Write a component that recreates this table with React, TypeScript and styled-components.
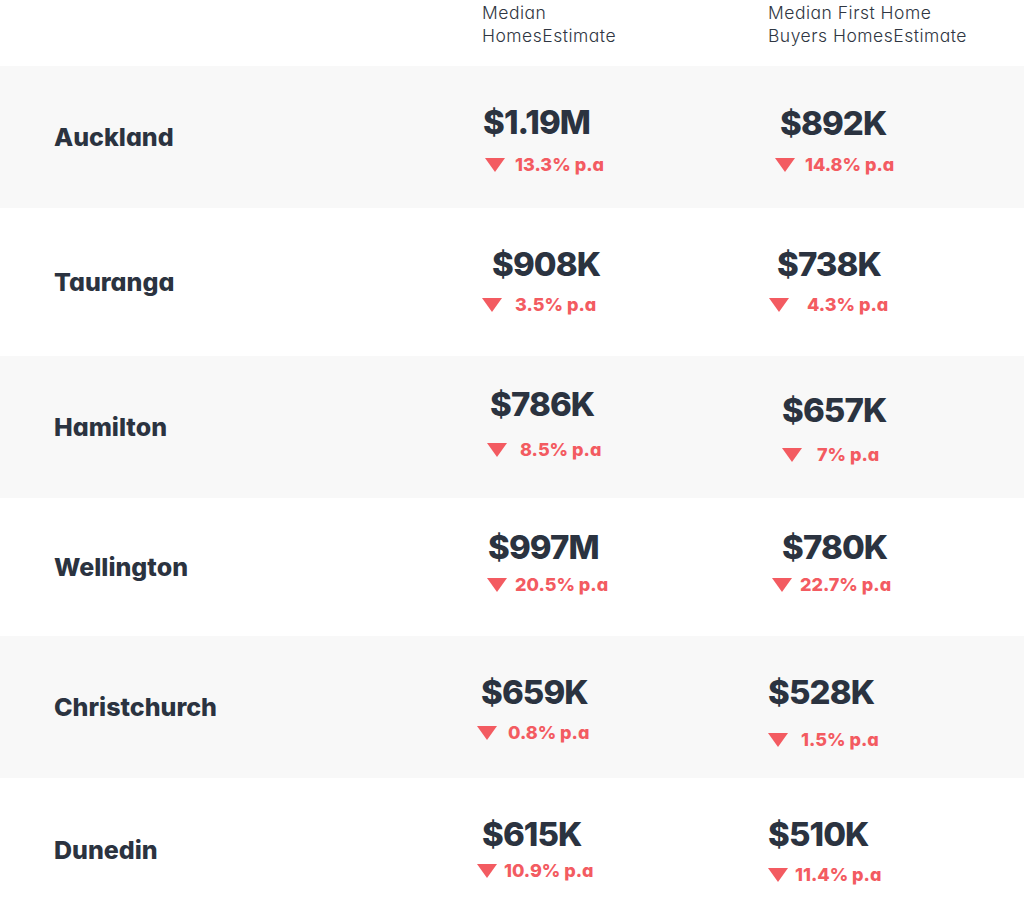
import React from "react";
import styled, { createGlobalStyle } from "styled-components";

const GlobalStyle = createGlobalStyle`
  body {
    margin: 0;
    background: #ffffff;
    font-family: Inter, "Liberation Sans", sans-serif;
    font-feature-settings: "cv11";
  }
`;

const Table = styled.div`
  width: 1024px;
`;

const HeaderRow = styled.div`
  display: grid;
  grid-template-columns: 470px 290px 1fr;
  height: 66px;
`;

const HeaderCell = styled.div<{ $indent: number }>`
  padding: 1px 0 0 ${p => p.$indent}px;
  font-size: 17.5px;
  font-weight: 300;
  line-height: 23px;
  letter-spacing: 0.5px;
  color: #2f3642;
`;

const Row = styled.div<{ $shade: boolean; $height: number }>`
  display: grid;
  grid-template-columns: 470px 290px 1fr;
  height: ${p => p.$height}px;
  background: ${p => (p.$shade ? "#f8f8f8" : "#ffffff")};
`;

const City = styled.div`
  display: flex;
  align-items: center;
  padding-left: 54px;
  font-size: 25px;
  font-weight: 850;
  color: #2b3340;
`;

const Cell = styled.div<{ $capTop: number }>`
  display: flex;
  flex-direction: column;
  align-items: flex-start;
  padding-top: ${p => p.$capTop - 5}px;
`;

const Value = styled.div<{ $shift: number }>`
  margin-left: ${p => p.$shift}px;
  font-size: 33px;
  font-weight: 800;
  line-height: 34px;
  letter-spacing: -0.9px;
  color: #2b3340;
`;

const Change = styled.div<{ $shift: number; $drop: number; $gap: number }>`
  display: flex;
  align-items: center;
  gap: ${p => p.$gap}px;
  margin-left: ${p => p.$shift}px;
  margin-top: ${p => p.$drop - 31}px;
  font-size: 18px;
  font-weight: 850;
  line-height: 18px;
  color: #f35b61;
`;

const Arrow = styled.span`
  width: 0;
  height: 0;
  border-left: 10px solid transparent;
  border-right: 10px solid transparent;
  border-top: 14px solid #f35b61;
`;

interface Estimate {
  value: string;
  change: string;
  capTop: number;
  drop: number;
  valueX: number;
  arrowX: number;
  gap: number;
}

interface City {
  name: string;
  height: number;
  median: Estimate;
  firstHome: Estimate;
}

const cities: City[] = [
  {
    name: "Auckland",
    height: 142,
    median: { value: "$1.19M", change: "13.3% p.a", capTop: 44, drop: 48, valueX: 13, arrowX: 15, gap: 10 },
    firstHome: { value: "$892K", change: "14.8% p.a", capTop: 45, drop: 47, valueX: 20, arrowX: 15, gap: 10 }
  },
  {
    name: "Tauranga",
    height: 148,
    median: { value: "$908K", change: "3.5% p.a", capTop: 44, drop: 46, valueX: 22, arrowX: 12, gap: 13 },
    firstHome: { value: "$738K", change: "4.3% p.a", capTop: 44, drop: 46, valueX: 17, arrowX: 9, gap: 18 }
  },
  {
    name: "Hamilton",
    height: 142,
    median: { value: "$786K", change: "8.5% p.a", capTop: 36, drop: 51, valueX: 20, arrowX: 17, gap: 13 },
    firstHome: { value: "$657K", change: "7% p.a", capTop: 42, drop: 50, valueX: 22, arrowX: 22, gap: 15 }
  },
  {
    name: "Wellington",
    height: 138,
    median: { value: "$997M", change: "20.5% p.a", capTop: 37, drop: 43, valueX: 18, arrowX: 17, gap: 8 },
    firstHome: { value: "$780K", change: "22.7% p.a", capTop: 37, drop: 43, valueX: 22, arrowX: 12, gap: 8 }
  },
  {
    name: "Christchurch",
    height: 142,
    median: { value: "$659K", change: "0.8% p.a", capTop: 44, drop: 46, valueX: 11, arrowX: 7, gap: 11 },
    firstHome: { value: "$528K", change: "1.5% p.a", capTop: 44, drop: 53, valueX: 8, arrowX: 8, gap: 13 }
  },
  {
    name: "Dunedin",
    height: 143,
    median: { value: "$615K", change: "10.9% p.a", capTop: 44, drop: 42, valueX: 12, arrowX: 7, gap: 7 },
    firstHome: { value: "$510K", change: "11.4% p.a", capTop: 44, drop: 46, valueX: 8, arrowX: 8, gap: 7 }
  }
];

const EstimateCell: React.FC<{ data: Estimate }> = ({ data }) => (
  <Cell $capTop={data.capTop}>
    <Value $shift={data.valueX}>{data.value}</Value>
    <Change $shift={data.arrowX} $drop={data.drop} $gap={data.gap}>
      <Arrow />
      {data.change}
    </Change>
  </Cell>
);

const App: React.FC = () => {
  return (
    <>
      <GlobalStyle />
      <Table>
        <HeaderRow>
          <div />
          <HeaderCell $indent={12}>
            Median
            <br />
            HomesEstimate
          </HeaderCell>
          <HeaderCell $indent={8}>
            Median First Home
            <br />
            Buyers HomesEstimate
          </HeaderCell>
        </HeaderRow>
        {cities.map((city, i) => (
          <Row key={city.name} $shade={i % 2 === 0} $height={city.height}>
            <City>{city.name}</City>
            <EstimateCell data={city.median} />
            <EstimateCell data={city.firstHome} />
          </Row>
        ))}
      </Table>
    </>
  );
};

export default App;
